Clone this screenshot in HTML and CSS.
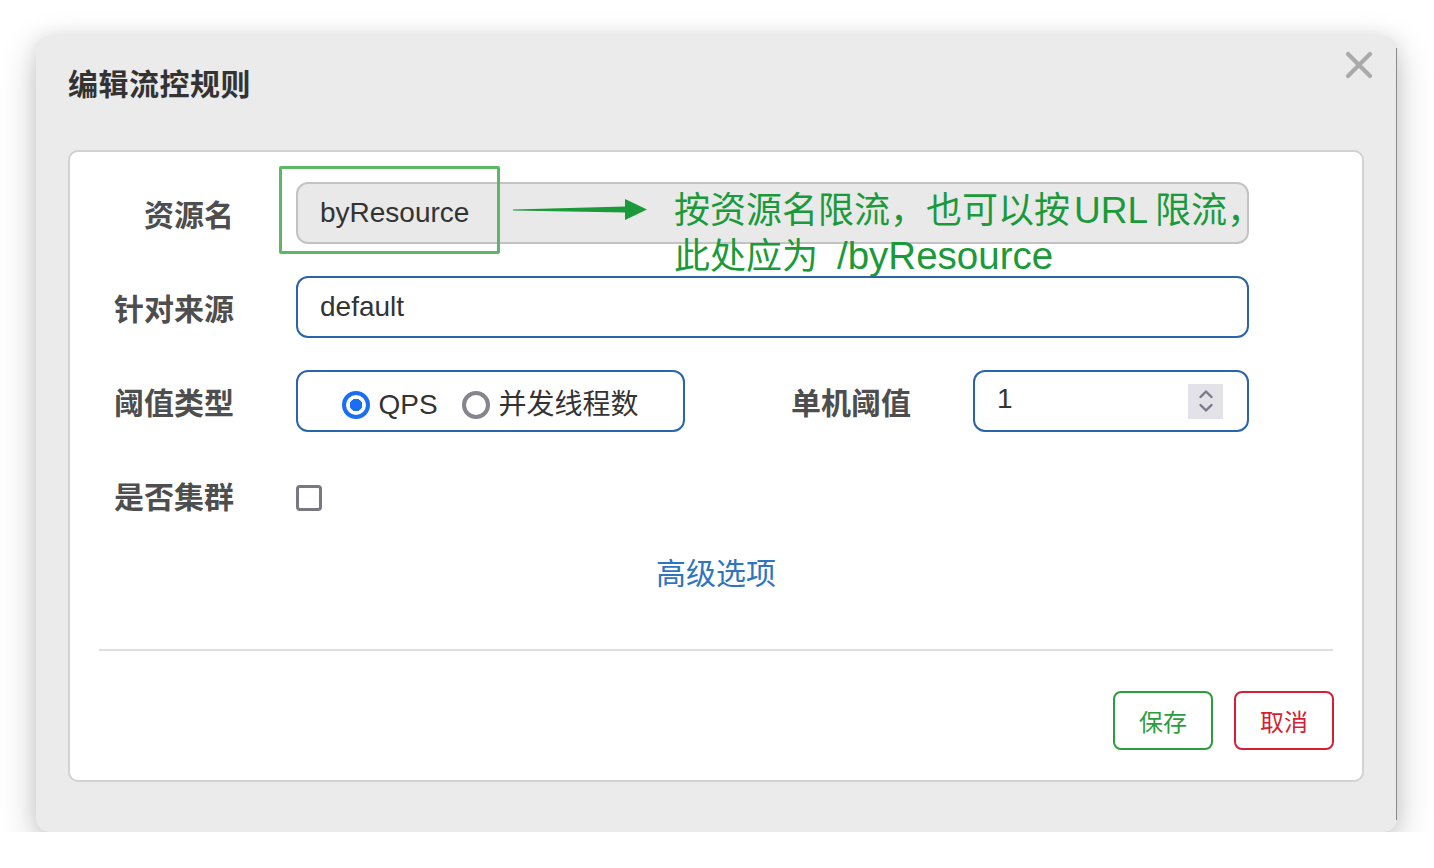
FILE: index.html
```html
<!DOCTYPE html>
<html lang="zh-CN">
<head>
<meta charset="utf-8">
<title>编辑流控规则</title>
<link rel="stylesheet" href="styles.css">
</head>
<body>
<div class="dialog">
  <div class="dialog-edge"></div>
  <div class="dialog-head">
    <h1 class="dialog-title">编辑流控规则</h1>
    <svg class="close" width="28" height="28" viewBox="0 0 28 28" aria-hidden="true">
      <path d="M3 3 L25 25 M25 3 L3 25" stroke="#aaaaaa" stroke-width="4.2" stroke-linecap="round"/>
    </svg>
  </div>
  <div class="panel">
    <div class="row row-first">
      <label class="label">资源名</label>
      <div class="control">
        <div class="input input-readonly">byResource</div>
      </div>
      <div class="note-box"></div>
      <svg class="note-arrow" width="136" height="26" viewBox="0 0 136 26" aria-hidden="true">
        <polygon points="0,11.5 112,8.5 112,1 134,11.5 112,22 112,14.5 0,12.5" fill="#1a9a3a"/>
      </svg>
      <div class="note-text">按资源名限流，也可以按<span class="latin latin-url">URL</span>限流，<br>此处应为<span class="latin latin-path">/byResource</span></div>
    </div>
    <div class="row">
      <label class="label">针对来源</label>
      <div class="control">
        <div class="input input-edit">default</div>
      </div>
    </div>
    <div class="row">
      <label class="label">阈值类型</label>
      <div class="radio-group">
        <span class="radio radio-on"></span><span class="radio-text">QPS</span>
        <span class="radio radio-off"></span><span class="radio-text">并发线程数</span>
      </div>
      <label class="label label-mid">单机阈值</label>
      <div class="control">
        <div class="input input-edit input-number">
          <span>1</span>
          <span class="spinner">
            <svg width="18" height="30" viewBox="0 0 18 30" aria-hidden="true">
              <path d="M3.5 11 L9 5.5 L14.5 11 M3.5 19 L9 24.5 L14.5 19" fill="none" stroke="#7b7889" stroke-width="2.4" stroke-linecap="round" stroke-linejoin="round"/>
            </svg>
          </span>
        </div>
      </div>
    </div>
    <div class="row">
      <label class="label">是否集群</label>
      <span class="checkbox"></span>
    </div>
    <div class="advanced">高级选项</div>
    <div class="divider"></div>
    <div class="footer">
      <button class="btn btn-save">保存</button>
      <button class="btn btn-cancel">取消</button>
    </div>
  </div>
</div>
</body>
</html>
```

FILE: styles.css
```css
html, body {
  margin: 0;
  padding: 0;
  background: #ffffff;
}
body {
  padding: 36px 0 0 36px;
  font-family: "Liberation Sans", "Noto Sans CJK SC", sans-serif;
}
.dialog {
  position: relative;
  box-sizing: border-box;
  width: 1361px;
  height: 796px;
  background: #ebebeb;
  border-radius: 14px;
  box-shadow: 0 12px 36px rgba(0, 0, 0, 0.22), 0 0 18px rgba(0, 0, 0, 0.08);
  padding: 26px 33px 0 32px;
}
.dialog-edge {
  position: absolute;
  right: 0;
  top: 12px;
  bottom: 12px;
  width: 1.5px;
  background: #8a8a8a;
}
.dialog-head {
  display: flex;
  justify-content: space-between;
  align-items: flex-start;
  height: 40px;
  margin-bottom: 48px;
}
.dialog-title {
  margin: 0;
  font-family: "Noto Sans CJK SC", sans-serif;
  font-size: 30px;
  line-height: 40px;
  font-weight: 700;
  color: #333333;
  letter-spacing: 0.5px;
}
.close {
  margin-top: -11px;
  margin-right: -9px;
}
.panel {
  box-sizing: border-box;
  height: 632px;
  background: #ffffff;
  border: 2px solid #d2d2d2;
  border-radius: 10px;
  padding: 30px 0 0 0;
}
.row {
  position: relative;
  display: flex;
  align-items: center;
  height: 62px;
  margin-bottom: 32px;
  padding-right: 113px;
}
.label {
  flex: 0 0 164px;
  box-sizing: border-box;
  text-align: right;
  margin-right: 62px;
  font-family: "Noto Sans CJK SC", sans-serif;
  font-size: 30px;
  font-weight: 700;
  color: #4e4e4e;
}
.label-mid {
  flex: 0 0 226px;
}
.control {
  flex: 1;
}
.input {
  box-sizing: border-box;
  height: 62px;
  border-radius: 12px;
  padding: 0 22px;
  display: flex;
  align-items: center;
  font-size: 28px;
  color: #333333;
}
.input-readonly {
  background: #e9e9e9;
  border: 2px solid #c3c3c3;
}
.input-edit {
  background: #ffffff;
  border: 2px solid #2a64ab;
}
.input-number {
  justify-content: space-between;
  padding-right: 24px;
  padding-bottom: 4px;
}
.spinner {
  display: flex;
  align-items: center;
  justify-content: center;
  width: 35px;
  height: 35px;
  margin-top: 4px;
  background: #e3e2e8;
}
.radio-group {
  flex: 0 0 389px;
  box-sizing: border-box;
  height: 62px;
  border: 2px solid #2a64ab;
  border-radius: 12px;
  display: flex;
  align-items: center;
  justify-content: center;
  padding-top: 7px;
  font-size: 28px;
  color: #333333;
}
.radio {
  box-sizing: border-box;
  width: 28px;
  height: 28px;
  border-radius: 50%;
  margin-right: 8px;
}
.radio-on {
  border: 4px solid #1b6ef3;
  background: radial-gradient(circle, #1b6ef3 0 6px, #ffffff 6.5px);
}
.radio-off {
  border: 4px solid #85848f;
  margin-left: 24px;
  margin-right: 9px;
}
.radio-text {
  font-family: "Liberation Sans", "Noto Sans CJK SC", sans-serif;
  line-height: 1;
}
.checkbox {
  box-sizing: border-box;
  width: 26px;
  height: 26px;
  border: 3px solid #787882;
  border-radius: 4px;
  margin-top: 6px;
}
.advanced {
  margin-top: -7px;
  text-align: center;
  font-family: "Noto Sans CJK SC", sans-serif;
  font-size: 30px;
  line-height: 40px;
  color: #2f74c0;
}
.divider {
  height: 2px;
  background: #dedede;
  margin: 58px 29px 0 29px;
}
.footer {
  display: flex;
  justify-content: flex-end;
  gap: 21px;
  margin-top: 40px;
  padding-right: 28px;
}
.btn {
  box-sizing: border-box;
  width: 100px;
  height: 59px;
  background: #ffffff;
  border-radius: 8px;
  font-family: "Noto Sans CJK SC", sans-serif;
  font-size: 24px;
  padding: 0;
}
.btn-save {
  border: 2px solid #2b9e3c;
  color: #2b9e3c;
}
.btn-cancel {
  border: 2px solid #d41f35;
  color: #d41f35;
}
.note-box {
  position: absolute;
  left: 209px;
  top: -16px;
  width: 221px;
  height: 88px;
  box-sizing: border-box;
  border: 3px solid #5db865;
  border-radius: 2px;
}
.note-arrow {
  position: absolute;
  left: 443px;
  top: 16px;
}
.note-text {
  position: absolute;
  left: 604px;
  top: 4px;
  font-family: "Noto Sans CJK SC", sans-serif;
  font-size: 36px;
  line-height: 42px;
  color: #1a9a3a;
  white-space: nowrap;
}
.latin {
  font-family: "Liberation Sans", sans-serif;
}
.latin-url {
  font-size: 37px;
  padding: 0 7px 0 4px;
}
.latin-path {
  font-size: 38.5px;
  padding-left: 19px;
}
```
